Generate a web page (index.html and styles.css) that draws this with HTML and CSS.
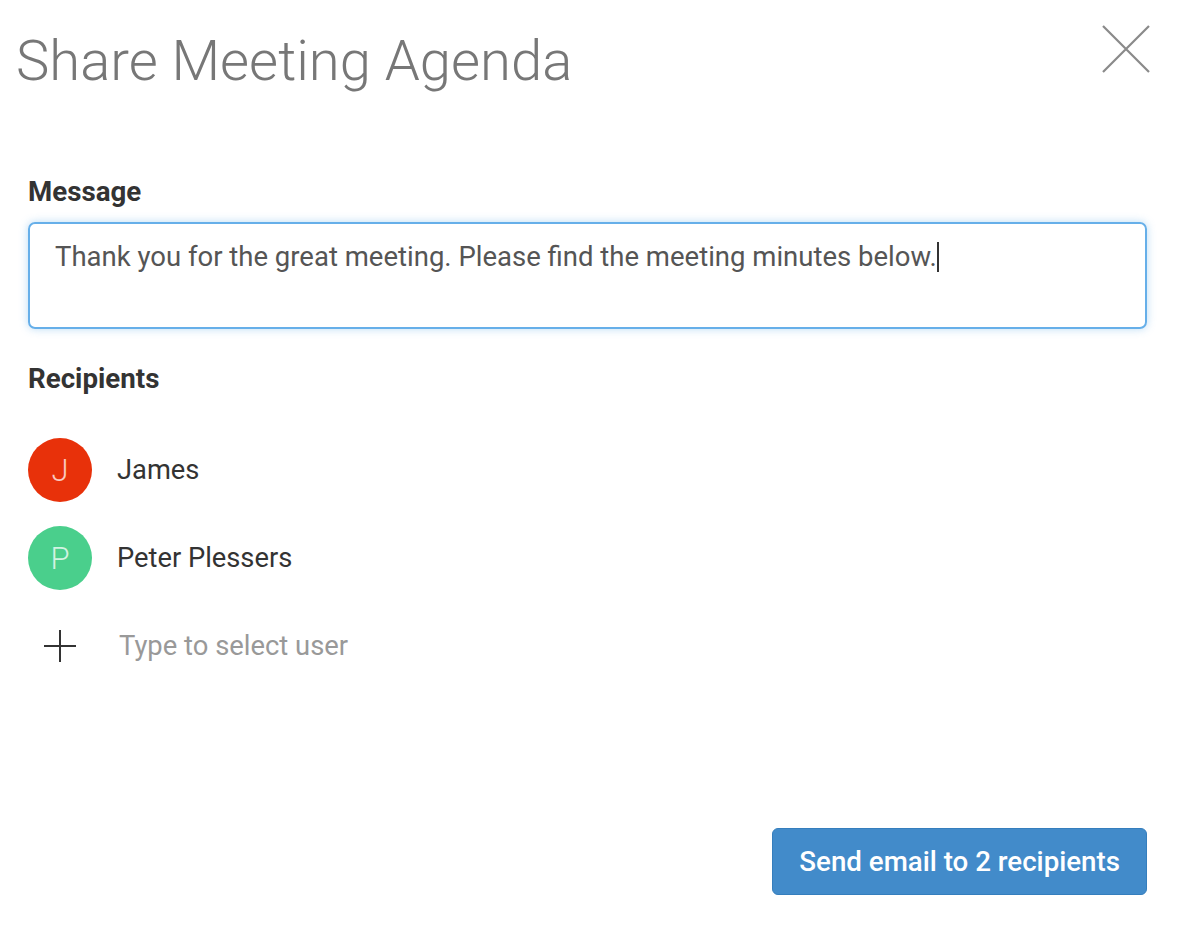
FILE: index.html
```html
<!DOCTYPE html>
<html lang="en">

<head>
  <meta charset="UTF-8">
  <meta name="viewport" content="width=device-width, initial-scale=1.0">
  <title>Share Meeting Agenda</title>
  <link rel="stylesheet" href="styles.css">
</head>

<body>
  <div class="modal">
    <div class="modal-header">
      <h1 class="modal-title">Share Meeting Agenda</h1>
      <button class="close" type="button" aria-label="Close">
        <svg width="48" height="48" viewBox="0 0 48 48">
          <path d="M1 1 L47 47 M47 1 L1 47" stroke="#8a8a8a" stroke-width="2.2" fill="none" />
        </svg>
      </button>
    </div>

    <div class="modal-body">
      <label class="field-label">Message</label>
      <div class="message-box">
        <span>Thank you for the great meeting. Please find the meeting minutes below.</span><span class="caret"></span>
      </div>

      <label class="field-label recipients-label">Recipients</label>
      <ul class="recipients">
        <li>
          <span class="avatar avatar-red">J</span>
          <span class="name">James</span>
        </li>
        <li>
          <span class="avatar avatar-green">P</span>
          <span class="name">Peter Plessers</span>
        </li>
        <li class="add-user">
          <span class="plus">
            <svg width="34" height="34" viewBox="0 0 34 34">
              <path d="M17 1 V33 M1 17 H33" stroke="#333" stroke-width="2" fill="none" />
            </svg>
          </span>
          <span class="placeholder">Type to select user</span>
        </li>
      </ul>
    </div>

    <div class="modal-footer">
      <button class="btn-primary" type="button">Send email to 2 recipients</button>
    </div>
  </div>
</body>

</html>
```

FILE: styles.css
```css
html,
body {
  margin: 0;
  padding: 0;
  background: #fff;
}

body {
  font-family: Roboto, "Liberation Sans", sans-serif;
  color: #333;
}

.modal {
  width: 1178px;
  height: 926px;
  display: flex;
  flex-direction: column;
}

.modal-header {
  display: flex;
  justify-content: space-between;
  align-items: flex-start;
  padding: 0 28px 0 16px;
}

.modal-title {
  margin: 25px 0 0;
  font-size: 56.2px;
  font-weight: 300;
  line-height: 72px;
  color: #777;
  letter-spacing: 0;
}

.close {
  margin: 25px 0 0;
  padding: 0;
  border: 0;
  background: none;
  line-height: 0;
  cursor: pointer;
}

.modal-body {
  padding: 0 31px 0 28px;
}

.field-label {
  display: block;
  font-size: 27.7px;
  font-weight: 700;
  color: #333;
  margin-top: 79px;
  line-height: 32px;
}

.message-box {
  margin-top: 14px;
  height: 107px;
  box-sizing: border-box;
  border: 2px solid #66afe9;
  border-radius: 7px;
  box-shadow: 0 0 8px rgba(102, 175, 233, 0.45);
  padding: 14px 25px;
  font-size: 27.5px;
  line-height: 38px;
  color: #555;
}

.caret {
  display: inline-block;
  width: 2px;
  height: 30px;
  background: #333;
  vertical-align: -6px;
}

.recipients-label {
  margin-top: 34px;
}

.recipients {
  list-style: none;
  margin: 43px 0 0;
  padding: 0;
}

.recipients li {
  display: flex;
  align-items: center;
  height: 64px;
  margin-bottom: 24px;
}

.avatar {
  flex: 0 0 auto;
  width: 64px;
  height: 64px;
  border-radius: 50%;
  display: flex;
  align-items: center;
  justify-content: center;
  font-size: 31px;
  font-weight: 300;
  color: rgba(255, 255, 255, 0.75);
}

.avatar-red {
  background: #e8310a;
}

.avatar-green {
  background: #4acf8c;
}

.name {
  margin-left: 25px;
  font-size: 27.3px;
  color: #333;
}

.plus {
  width: 64px;
  display: flex;
  justify-content: center;
  line-height: 0;
}

.placeholder {
  margin-left: 27px;
  font-size: 27.4px;
  color: #999;
}

.modal-footer {
  margin-top: auto;
  display: flex;
  justify-content: flex-end;
  padding: 0 31px 31px 0;
}

.btn-primary {
  font-family: Roboto, "Liberation Sans", sans-serif;
  font-size: 27.7px;
  font-weight: 500;
  color: #fff;
  background: #428bca;
  border: 1px solid #357ebd;
  border-radius: 6px;
  height: 67px;
  padding: 0 26px;
  cursor: pointer;
}
```
